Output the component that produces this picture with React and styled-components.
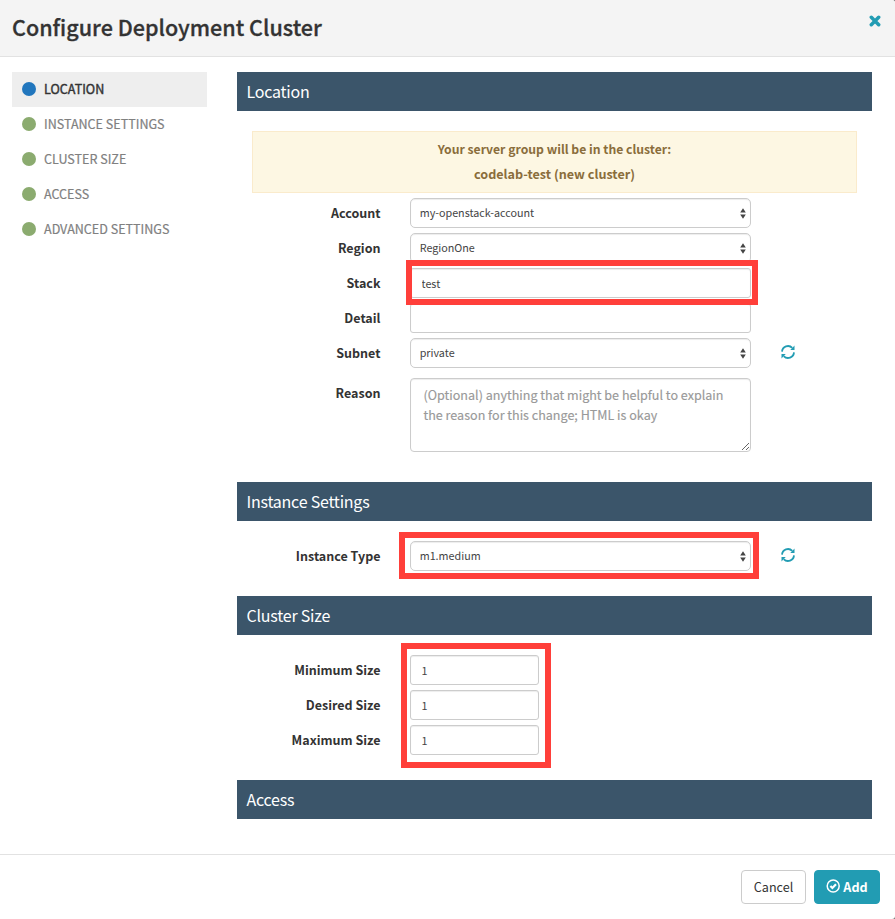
import React from "react";
import styled, { createGlobalStyle } from "styled-components";

const GlobalStyle = createGlobalStyle`
  *, *::before, *::after { box-sizing: border-box; }
  body {
    margin: 0;
    background: #777;
    color: #333;
    font-family: "Noto Sans CJK SC", "Open Sans", sans-serif;
    font-size: 12.6px;
    overflow: hidden;
  }
  input, textarea, button { font-family: inherit; outline: none; }
`;

const Modal = styled.div`
  display: flex;
  flex-direction: column;
  width: 895px;
  height: 919px;
  background: #fff;
  border-radius: 0 3px 3px 0;
  overflow: hidden;
`;

const Header = styled.header`
  display: flex;
  justify-content: space-between;
  height: 57px;
  padding: 0 14px 0 12px;
  background: #f4f4f4;
  border-bottom: 1px solid #e2e2e2;
`;

const Title = styled.h1`
  margin: 0;
  font-size: 21.55px;
  line-height: 53px;
  font-weight: 500;
  white-space: nowrap;
  -webkit-text-stroke: 0.3px #333;
`;

const CloseButton = styled.button`
  display: flex;
  height: 12px;
  margin-top: 15px;
  padding: 0;
  border: 0;
  background: none;
  color: #229cb3;
`;

const Body = styled.div`
  display: flex;
  gap: 30px;
  height: 797px;
  padding: 15px 23px 0 12px;
`;

const Nav = styled.nav`
  width: 195px;
`;

const NavItem = styled.a`
  display: flex;
  align-items: center;
  gap: 8px;
  height: 35px;
  padding: 0 0 2px 10px;
  font-size: 12.55px;
  white-space: nowrap;
  color: ${(p) => (p.$active ? "#333" : "#808080")};
  background: ${(p) => (p.$active ? "#eee" : "transparent")};
  -webkit-text-stroke: ${(p) => (p.$active ? "0.4px" : "0.2px")};

  &::before {
    content: "";
    width: 14px;
    height: 14px;
    border-radius: 50%;
    background: ${(p) => (p.$active ? "#2176bd" : "#8bab6f")};
  }
`;

const Main = styled.main`
  width: 635px;
`;

const SectionTitle = styled.h2`
  margin: 0;
  height: 39px;
  padding-left: 9.5px;
  background: #3b556a;
  color: #fff;
  font-size: 16px;
  letter-spacing: -0.23px;
  line-height: 39px;
  font-weight: 400;
`;

const SectionBody = styled.div`
  height: ${(p) => p.$height}px;
  padding-top: 20px;
`;

const Notice = styled.div`
  height: 62px;
  margin: 0 15px 5px;
  padding-top: 5px;
  border: 1px solid #faebcc;
  background: #fdf7e3;
  color: #8a6d3b;
  text-align: center;
  font-weight: 700;
`;

const NoticeText = styled.div`
  font-size: 12.2px;
  line-height: 25px;
`;

const NoticeCluster = styled.div`
  font-size: 12.6px;
  line-height: 23px;
`;

const Row = styled.div`
  display: grid;
  grid-template-columns: 143.5px auto 14px;
  justify-content: start;
  column-gap: 29.5px;
  margin-bottom: ${(p) => p.$gap ?? 5}px;
`;

const Label = styled.label`
  text-align: right;
  font-weight: 700;
  font-size: 12.5px;
  line-height: 30px;
  white-space: nowrap;
`;

const Field = styled.div`
  position: relative;
  width: ${(p) => p.$width ?? 341}px;
`;

const Select = styled.div`
  display: flex;
  align-items: center;
  justify-content: space-between;
  height: 30px;
  padding: 0 4px 0 8.7px;
  border: 1px solid #ccc;
  border-radius: 5px;
  box-shadow: inset 0 1px 1px rgba(0, 0, 0, 0.075);
  color: #444;
  font-size: 10.75px;
  line-height: 28px;
`;

const Input = styled.input`
  display: block;
  width: 100%;
  height: 30px;
  padding: 1px 10.5px 0;
  border: 1px solid #ccc;
  border-radius: 3px;
  box-shadow: inset 0 1px 1px rgba(0, 0, 0, 0.075);
  background: #fff;
  color: #444;
  font-size: 10.75px;
`;

const TextArea = styled.textarea`
  display: block;
  width: 100%;
  height: 74px;
  padding: 6px 12px 6px 12.5px;
  border: 1px solid #ccc;
  border-radius: 4px;
  box-shadow: inset 0 1px 1px rgba(0, 0, 0, 0.075);
  font-size: 12.55px;
  line-height: 20px;
  overflow: hidden;
  resize: vertical;

  &::placeholder {
    color: #999;
    opacity: 1;
    -webkit-text-stroke: 0.15px #999;
  }
`;

const Highlight = styled.div`
  position: absolute;
  z-index: 1;
  inset: ${(p) => p.$inset};
  border: 6px solid #ff3f3a;
  pointer-events: none;
`;

const Refresh = styled.button`
  display: flex;
  margin-top: 7px;
  padding: 0;
  border: 0;
  height: 14px;
  background: none;
  color: #229cb3;
`;

const Footer = styled.footer`
  display: flex;
  justify-content: flex-end;
  gap: 8px;
  height: 65px;
  padding: 15px 15px 0 0;
  border-top: 1px solid #e2e2e2;
`;

const Button = styled.button`
  display: flex;
  align-items: center;
  justify-content: center;
  gap: 3px;
  width: ${(p) => (p.$primary ? 66 : 65)}px;
  height: 34px;
  padding: 0 0 2px;
  border: 1px solid ${(p) => (p.$primary ? "#229cb3" : "#ccc")};
  border-radius: 4px;
  background: ${(p) => (p.$primary ? "#229cb3" : "#fff")};
  color: ${(p) => (p.$primary ? "#fff" : "#333")};
  font-size: 12.6px;
  font-weight: ${(p) => (p.$primary ? 700 : 400)};
`;

const CloseIcon = () => (
  <svg width="12" height="12" viewBox="0 0 12 12">
    <path d="M2.3 2.3 9.7 9.7M9.7 2.3 2.3 9.7" stroke="currentColor" strokeWidth="3.5" strokeLinecap="round" />
  </svg>
);

const RefreshIcon = () => (
  <svg width="14" height="14" viewBox="0 0 14 14" fill="none">
    <path d="M1 6.6A6 6 0 0 1 11.3 2.9M13 7.4A6 6 0 0 1 2.7 11.1" stroke="currentColor" strokeWidth="1.8" />
    <path d="M13.5.6v4.5H9.2l1.6-1.6zM.5 13.4V8.9h4.3L3.2 10.5z" fill="currentColor" />
  </svg>
);

const CheckCircleIcon = () => (
  <svg width="14" height="14" viewBox="0 0 14 14" fill="none" stroke="currentColor">
    <circle cx="7.2" cy="7" r="6" strokeWidth="1.5" />
    <path d="M4.4 7 6.4 9 10 5.2" strokeWidth="2.2" />
  </svg>
);

const Arrows = () => (
  <svg width="6" height="11" viewBox="0 0 6 11" fill="#444">
    <path d="M3 .2 5.8 4.5H.2zM3 10.7 5.8 6.4H.2z" />
  </svg>
);

const steps = ["LOCATION", "INSTANCE SETTINGS", "CLUSTER SIZE", "ACCESS", "ADVANCED SETTINGS"];

function SelectRow({ label, value, gap, refresh, highlight }) {
  return (
    <Row $gap={gap}>
      <Label>{label}</Label>
      <Field>
        <Select>{value}<Arrows /></Select>
        {highlight && <Highlight $inset={highlight} />}
      </Field>
      {refresh && <Refresh aria-label="Refresh"><RefreshIcon /></Refresh>}
    </Row>
  );
}

function InputRow({ label, value, width, highlight }) {
  return (
    <Row>
      <Label>{label}</Label>
      <Field $width={width}>
        <Input defaultValue={value} />
        {highlight && <Highlight $inset={highlight} />}
      </Field>
    </Row>
  );
}

export default function App() {
  return (
    <>
      <GlobalStyle />
      <Modal>
        <Header>
          <Title>Configure Deployment Cluster</Title>
          <CloseButton aria-label="Close"><CloseIcon /></CloseButton>
        </Header>
        <Body>
          <Nav>
            {steps.map((step, i) => <NavItem key={step} $active={i === 0}>{step}</NavItem>)}
          </Nav>
          <Main>
            <SectionTitle>Location</SectionTitle>
            <SectionBody $height={371}>
              <Notice>
                <NoticeText>Your server group will be in the cluster:</NoticeText>
                <NoticeCluster>codelab-test (new cluster)</NoticeCluster>
              </Notice>
              <SelectRow label="Account" value="my-openstack-account" />
              <SelectRow label="Region" value="RegionOne" />
              <InputRow label="Stack" value="test" highlight="-8px -7px -7px -4px" />
              <InputRow label="Detail" value="" />
              <SelectRow label="Subnet" value="private" gap={10} refresh />
              <Row>
                <Label>Reason</Label>
                <Field>
                  <TextArea placeholder="(Optional) anything that might be helpful to explain the reason for this change; HTML is okay" />
                </Field>
              </Row>
            </SectionBody>
            <SectionTitle>Instance Settings</SectionTitle>
            <SectionBody $height={75}>
              <SelectRow label="Instance Type" value="m1.medium" refresh highlight="-9px -8px -8px -11px" />
            </SectionBody>
            <SectionTitle>Cluster Size</SectionTitle>
            <SectionBody $height={145}>
              <InputRow label="Minimum Size" value="1" width={129} highlight="-12px -12px -83px -9px" />
              <InputRow label="Desired Size" value="1" width={129} />
              <InputRow label="Maximum Size" value="1" width={129} />
            </SectionBody>
            <SectionTitle>Access</SectionTitle>
          </Main>
        </Body>
        <Footer>
          <Button>Cancel</Button>
          <Button $primary><CheckCircleIcon />Add</Button>
        </Footer>
      </Modal>
    </>
  );
}
